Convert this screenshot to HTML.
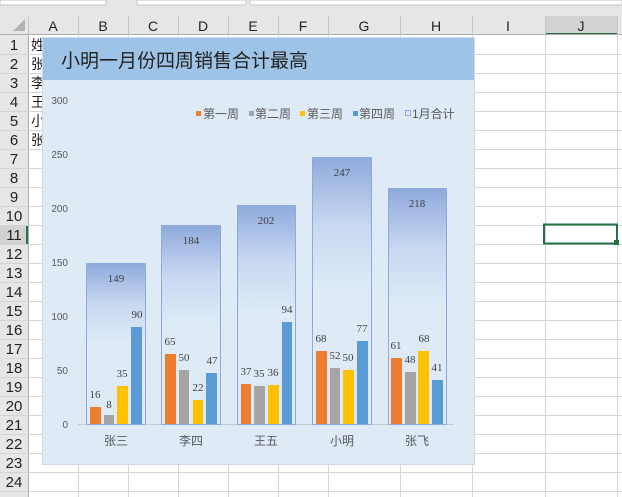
<!DOCTYPE html>
<html><head><meta charset="utf-8"><style>
body{margin:0;width:622px;height:497px;overflow:hidden;background:#fff;font-family:"Liberation Sans","Noto Sans CJK SC",sans-serif;}
</style></head><body>
<svg width="622" height="497" xmlns="http://www.w3.org/2000/svg" style="position:absolute;left:0;top:0">
<defs>
<linearGradient id="g" x1="0" y1="0" x2="0" y2="1" gradientUnits="objectBoundingBox">
<stop offset="0" stop-color="#8eaadc"/><stop offset="0.25" stop-color="#c8d7f0"/><stop offset="0.5" stop-color="#deebf7"/><stop offset="1" stop-color="#deebf7"/>
</linearGradient>
</defs>
<rect x="0" y="0" width="622" height="16" fill="#e6e6e6"/>
<rect x="0" y="0" width="106" height="5" fill="#fff" stroke="#c6c6c6"/>
<rect x="137" y="0" width="109" height="5" fill="#fff" stroke="#c6c6c6"/>
<rect x="250" y="0" width="372" height="5" fill="#fff" stroke="#c6c6c6"/>
<rect x="0" y="16" width="622" height="19" fill="#e6e6e6"/>
<rect x="545" y="16" width="72" height="19" fill="#d2d2d2"/>
<line x1="545" y1="34" x2="617" y2="34" stroke="#217346" stroke-width="2"/>
<line x1="0" y1="34.5" x2="622" y2="34.5" stroke="#ababab"/>
<polygon points="25,19 25,31 13,31" fill="#b4b4b4"/>
<g stroke="#c6c6c6">
<line x1="28.5" y1="16" x2="28.5" y2="35"/><line x1="78.5" y1="16" x2="78.5" y2="35"/><line x1="128.5" y1="16" x2="128.5" y2="35"/><line x1="178.5" y1="16" x2="178.5" y2="35"/><line x1="228.5" y1="16" x2="228.5" y2="35"/><line x1="278.5" y1="16" x2="278.5" y2="35"/><line x1="328.5" y1="16" x2="328.5" y2="35"/><line x1="400.5" y1="16" x2="400.5" y2="35"/><line x1="472.5" y1="16" x2="472.5" y2="35"/><line x1="545.5" y1="16" x2="545.5" y2="35"/><line x1="617.5" y1="16" x2="617.5" y2="35"/>
</g>
<g font-size="14" fill="#222" text-anchor="middle">
<text x="53" y="31">A</text><text x="103" y="31">B</text><text x="153" y="31">C</text><text x="203" y="31">D</text><text x="253" y="31">E</text><text x="303" y="31">F</text><text x="364" y="31">G</text><text x="436" y="31">H</text><text x="508" y="31">I</text><text x="581" y="31">J</text>
</g>
<rect x="0" y="35" width="28" height="462" fill="#e6e6e6"/>
<line x1="28.5" y1="35" x2="28.5" y2="497" stroke="#ababab"/>
<rect x="0" y="225" width="28" height="19" fill="#d2d2d2"/>
<line x1="27" y1="225" x2="27" y2="244" stroke="#217346" stroke-width="2"/>
<g stroke="#d4d4d4">
<line x1="0" y1="54.5" x2="622" y2="54.5"/><line x1="0" y1="73.5" x2="622" y2="73.5"/><line x1="0" y1="92.5" x2="622" y2="92.5"/><line x1="0" y1="111.5" x2="622" y2="111.5"/><line x1="0" y1="130.5" x2="622" y2="130.5"/><line x1="0" y1="149.5" x2="622" y2="149.5"/><line x1="0" y1="168.5" x2="622" y2="168.5"/><line x1="0" y1="187.5" x2="622" y2="187.5"/><line x1="0" y1="206.5" x2="622" y2="206.5"/><line x1="0" y1="225.5" x2="622" y2="225.5"/><line x1="0" y1="244.5" x2="622" y2="244.5"/><line x1="0" y1="263.5" x2="622" y2="263.5"/><line x1="0" y1="282.5" x2="622" y2="282.5"/><line x1="0" y1="301.5" x2="622" y2="301.5"/><line x1="0" y1="320.5" x2="622" y2="320.5"/><line x1="0" y1="339.5" x2="622" y2="339.5"/><line x1="0" y1="358.5" x2="622" y2="358.5"/><line x1="0" y1="377.5" x2="622" y2="377.5"/><line x1="0" y1="396.5" x2="622" y2="396.5"/><line x1="0" y1="415.5" x2="622" y2="415.5"/><line x1="0" y1="434.5" x2="622" y2="434.5"/><line x1="0" y1="453.5" x2="622" y2="453.5"/><line x1="0" y1="472.5" x2="622" y2="472.5"/><line x1="0" y1="491.5" x2="622" y2="491.5"/>
<line x1="78.5" y1="35" x2="78.5" y2="497"/><line x1="128.5" y1="35" x2="128.5" y2="497"/><line x1="178.5" y1="35" x2="178.5" y2="497"/><line x1="228.5" y1="35" x2="228.5" y2="497"/><line x1="278.5" y1="35" x2="278.5" y2="497"/><line x1="328.5" y1="35" x2="328.5" y2="497"/><line x1="400.5" y1="35" x2="400.5" y2="497"/><line x1="472.5" y1="35" x2="472.5" y2="497"/><line x1="545.5" y1="35" x2="545.5" y2="497"/><line x1="617.5" y1="35" x2="617.5" y2="497"/>
</g>
<g font-size="15" fill="#222" text-anchor="middle">
<text x="14" y="50">1</text><text x="14" y="69">2</text><text x="14" y="88">3</text><text x="14" y="107">4</text><text x="14" y="126">5</text><text x="14" y="145">6</text><text x="14" y="164">7</text><text x="14" y="183">8</text><text x="14" y="202">9</text><text x="14" y="221">10</text><text x="14" y="240">11</text><text x="14" y="259">12</text><text x="14" y="278">13</text><text x="14" y="297">14</text><text x="14" y="316">15</text><text x="14" y="335">16</text><text x="14" y="354">17</text><text x="14" y="373">18</text><text x="14" y="392">19</text><text x="14" y="411">20</text><text x="14" y="430">21</text><text x="14" y="449">22</text><text x="14" y="468">23</text><text x="14" y="487">24</text>
</g>
<g font-size="14" fill="#222">
<text x="31" y="50">姓</text><text x="31" y="69">张</text><text x="31" y="88">李</text><text x="31" y="107">王</text><text x="31" y="126">小</text><text x="31" y="145">张</text>
</g>
<rect x="544" y="224.5" width="73" height="19" fill="none" stroke="#217346" stroke-width="2"/>
<rect x="614" y="240" width="5" height="5" fill="#217346"/>
<rect x="42.5" y="37.5" width="432" height="427" fill="#deebf7" stroke="#d0d8e4"/>
<rect x="43" y="38" width="431" height="42" fill="#9dc3e6"/>
<text x="61" y="67" font-size="19" fill="#222">小明一月份四周销售合计最高</text>
<g font-size="10" fill="#595959" text-anchor="end">
<text x="68" y="104">300</text><text x="68" y="158">250</text><text x="68" y="212">200</text><text x="68" y="266">150</text><text x="68" y="320">100</text><text x="68" y="374">50</text><text x="68" y="428">0</text>
</g>
<g font-size="12" fill="#595959">
<rect x="196" y="111" width="5" height="5" fill="#ed7d31"/><text x="203" y="118">第一周</text>
<rect x="249" y="111" width="5" height="5" fill="#a5a5a5"/><text x="255" y="118">第二周</text>
<rect x="300" y="111" width="5" height="5" fill="#ffc000"/><text x="307" y="118">第三周</text>
<rect x="353" y="111" width="5" height="5" fill="#5b9bd5"/><text x="359" y="118">第四周</text>
<rect x="405.5" y="110.5" width="5" height="5" fill="none" stroke="#8eaadc"/><text x="412" y="118">1月合计</text>
</g>
<line x1="78" y1="424.5" x2="454" y2="424.5" stroke="#c9c9c9"/>
<g stroke="#8eaadc" fill="url(#g)">
<rect x="86.5" y="263.5" width="59" height="161"/>
<rect x="161.5" y="225.5" width="59" height="199"/>
<rect x="237.5" y="205.5" width="58" height="219"/>
<rect x="312.5" y="157.5" width="59" height="267"/>
<rect x="388.5" y="188.5" width="58" height="236"/>
</g>
<g font-size="11" fill="#404040" text-anchor="middle" font-family="'Liberation Serif',serif">
<text x="116" y="282">149</text><text x="191" y="244">184</text><text x="266" y="224">202</text><text x="342" y="176">247</text><text x="417" y="207">218</text>
</g>
<g>
<rect x="90" y="407" width="11" height="17" fill="#ed7d31"/><rect x="104" y="415" width="10" height="9" fill="#a5a5a5"/><rect x="117" y="386" width="11" height="38" fill="#ffc000"/><rect x="131" y="327" width="11" height="97" fill="#5b9bd5"/>
<rect x="165" y="354" width="11" height="70" fill="#ed7d31"/><rect x="179" y="370" width="10" height="54" fill="#a5a5a5"/><rect x="193" y="400" width="10" height="24" fill="#ffc000"/><rect x="206" y="373" width="11" height="51" fill="#5b9bd5"/>
<rect x="241" y="384" width="10" height="40" fill="#ed7d31"/><rect x="254" y="386" width="11" height="38" fill="#a5a5a5"/><rect x="268" y="385" width="11" height="39" fill="#ffc000"/><rect x="282" y="322" width="10" height="102" fill="#5b9bd5"/>
<rect x="316" y="351" width="11" height="73" fill="#ed7d31"/><rect x="330" y="368" width="10" height="56" fill="#a5a5a5"/><rect x="343" y="370" width="11" height="54" fill="#ffc000"/><rect x="357" y="341" width="11" height="83" fill="#5b9bd5"/>
<rect x="391" y="358" width="11" height="66" fill="#ed7d31"/><rect x="405" y="372" width="11" height="52" fill="#a5a5a5"/><rect x="418" y="351" width="11" height="73" fill="#ffc000"/><rect x="432" y="380" width="11" height="44" fill="#5b9bd5"/>
</g>
<g font-size="11" fill="#404040" text-anchor="middle" font-family="'Liberation Serif',serif">
<text x="95" y="398">16</text><text x="109" y="408">8</text><text x="122" y="377">35</text><text x="137" y="318">90</text>
<text x="170" y="345">65</text><text x="184" y="361">50</text><text x="198" y="391">22</text><text x="212" y="364">47</text>
<text x="246" y="375">37</text><text x="259" y="377">35</text><text x="273" y="376">36</text><text x="287" y="313">94</text>
<text x="321" y="342">68</text><text x="335" y="359">52</text><text x="348" y="361">50</text><text x="362" y="332">77</text>
<text x="396" y="349">61</text><text x="410" y="363">48</text><text x="424" y="342">68</text><text x="437" y="371">41</text>
</g>
<g font-size="12" fill="#595959" text-anchor="middle">
<text x="116" y="445">张三</text><text x="191" y="445">李四</text><text x="266" y="445">王五</text><text x="342" y="445">小明</text><text x="417" y="445">张飞</text>
</g>
</svg>
</body></html>
